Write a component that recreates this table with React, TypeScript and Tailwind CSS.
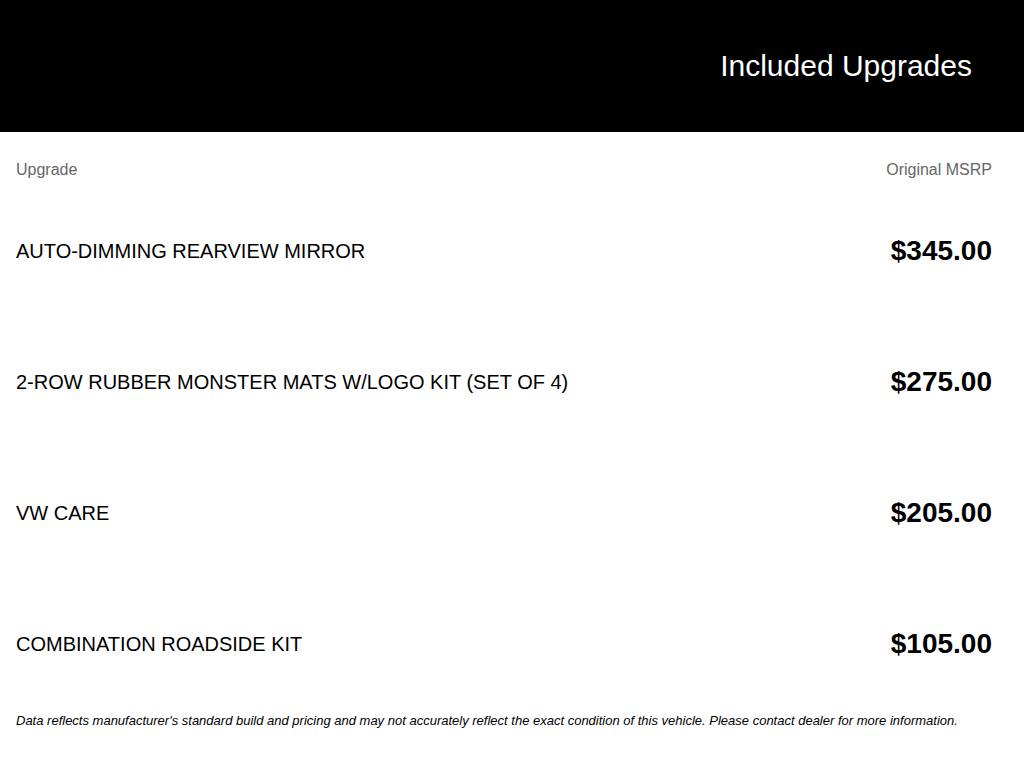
const upgrades = [
  { name: 'AUTO-DIMMING REARVIEW MIRROR', price: '$345.00' },
  { name: '2-ROW RUBBER MONSTER MATS W/LOGO KIT (SET OF 4)', price: '$275.00' },
  { name: 'VW CARE', price: '$205.00' },
  { name: 'COMBINATION ROADSIDE KIT', price: '$105.00' },
];

const App = () => {
  return (
    <div className="w-[1024px] h-[768px] bg-white font-['Liberation_Sans',Arial,sans-serif] overflow-hidden">
      {/* Header */}
      <div className="h-[132px] bg-black flex items-center justify-end pr-[52px]">
        <h1 className="text-white text-[30px] leading-[34px]">Included Upgrades</h1>
      </div>

      <div className="pl-4 pr-8">
        {/* Column headings */}
        <div className="flex justify-between pt-[29px] text-[16px] leading-[18px] text-[#666666]">
          <span>Upgrade</span>
          <span>Original MSRP</span>
        </div>

        {/* Rows */}
        <div className="mt-[6px]">
          {upgrades.map((item) => (
            <div key={item.name} className="h-[131px] flex items-center justify-between">
              <span className="text-[20px] leading-[24px] text-black">{item.name}</span>
              <span className="text-[28px] leading-[32px] font-bold text-black">{item.price}</span>
            </div>
          ))}
        </div>

        {/* Disclaimer */}
        <p className="mt-[4px] text-[13px] leading-[16px] italic text-black">
          Data reflects manufacturer's standard build and pricing and may not accurately reflect the exact condition of this vehicle. Please contact dealer for more information.
        </p>
      </div>
    </div>
  );
};

export default App;
